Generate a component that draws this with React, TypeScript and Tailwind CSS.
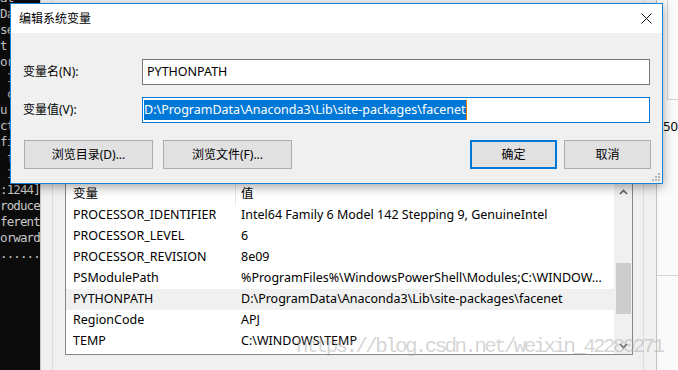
import React from "react";

const termLines = ["at", "Da", "se", "t", "or", " 1", " c", "u", "ct", "fi", " f", " 1", ":1244]", "roduce", "ferent", "orward", "......"];

const rows: [string, string][] = [
  ["PROCESSOR_IDENTIFIER", "Intel64 Family 6 Model 142 Stepping 9, GenuineIntel"],
  ["PROCESSOR_LEVEL", "6"],
  ["PROCESSOR_REVISION", "8e09"],
  ["PSModulePath", "%ProgramFiles%\\WindowsPowerShell\\Modules;C:\\WINDOW..."],
  ["PYTHONPATH", "D:\\ProgramData\\Anaconda3\\Lib\\site-packages\\facenet"],
  ["RegionCode", "APJ"],
  ["TEMP", "C:\\WINDOWS\\TEMP"],
];

function Chevron({ up }: { up?: boolean }) {
  return (
    <svg width="9" height="6" viewBox="0 0 9 6">
      <path d={up ? "M1 5 L4.5 1.5 L8 5" : "M1 1 L4.5 4.5 L8 1"} fill="none" stroke="#606060" strokeWidth="1.6" />
    </svg>
  );
}

export default function App() {
  return (
    <div className="relative w-[678px] h-[370px] overflow-hidden bg-[#f0f0f0] font-['Noto_Sans','Noto_Sans_CJK_SC',sans-serif] text-[12.5px] text-black">
      {/* terminal */}
      <div className="absolute left-0 top-[-10px] w-[40px] h-[390px] bg-[#0c0c0c] overflow-hidden font-['DejaVu_Sans_Mono',monospace] leading-[16px] text-[#c8c8c8] whitespace-pre">
        {termLines.map((l, i) => (
          <div key={i} className="h-[16px] text-[12.5px] tracking-[-0.9px]">{l}</div>
        ))}
      </div>

      {/* environment variables window */}
      <div className="absolute left-[40px] top-0 w-[617px] h-[370px] bg-[#f0f0f0] border-l border-r border-[#c4c4c4] pl-[11px]">
        <div className="h-full w-[592px] border-l border-r border-[#dcdcdc] pl-[12px] pt-[182px]">
          <div className="w-[568px] h-[173px] border border-[#828790] bg-white flex">
            <div className="flex-1 flex flex-col">
              <div className="h-[22px] flex items-center">
                <div className="w-[170px] h-full border-r border-[#e5e5e5] pl-[7px] flex items-center">变量</div>
                <div className="pl-[5px]">值</div>
              </div>
              {rows.map(([k, v]) => (
                <div key={k} className={`h-[21px] flex items-center whitespace-nowrap ${k === "PYTHONPATH" ? "bg-[#f0f0f0]" : ""}`}>
                  <div className="w-[170px] pl-[7px]">{k}</div>
                  <div className="pl-[5px]">{v}</div>
                </div>
              ))}
            </div>
            <div className="w-[18px] bg-[#f0f0f0] flex flex-col items-center">
              <div className="h-[17px] flex items-center justify-center"><Chevron up /></div>
              <div className="mt-[63px] w-[15px] h-[51px] bg-[#cdcdcd]" />
              <div className="flex-1" />
              <div className="h-[17px] flex items-center justify-center"><Chevron /></div>
            </div>
          </div>
        </div>
      </div>

      {/* right window */}
      <div className="absolute left-[657px] top-0 w-[21px] h-[370px] bg-[#fafafa] flex flex-col">
        <div className="h-[100px] border-b border-[#d4d4d4] ml-[10px] border-l" />
        <div className="pt-[17px] pl-[6px] text-[13px] leading-[18px]">50</div>
        <div className="mt-[140px] border-t border-[#d4d4d4]" />
      </div>

      {/* edit dialog */}
      <div className="absolute left-[10px] top-[3px] w-[653px] h-[181px] border border-[#1883d7] bg-[#f0f0f0] flex flex-col shadow-[0_3px_10px_rgba(0,0,0,0.35)]">
        <div className="h-[29px] bg-white flex items-center justify-between pl-[8px] pr-[10px]">
          <span className="text-[12px]">编辑系统变量</span>
          <svg width="11" height="11" viewBox="0 0 11 11">
            <path d="M0.5 0.5 L10.5 10.5 M10.5 0.5 L0.5 10.5" stroke="#111" strokeWidth="1" />
          </svg>
        </div>
        <div className="relative flex-1 pl-[12px] pr-[11px] pt-[26px] flex flex-col">
          <div className="flex items-center">
            <div className="w-[119px] text-[12px]">变量名(N):</div>
            <div className="w-[508px] h-[26px] border border-[#7a7a7a] bg-white flex items-center pl-[4px]">PYTHONPATH</div>
          </div>
          <div className="flex items-center mt-[12px]">
            <div className="w-[119px] text-[12px]">变量值(V):</div>
            <div className="w-[508px] h-[26px] border border-[#0078d7] bg-white flex items-center pl-[1px]">
              <span className="bg-[#0078d7] text-white leading-[20px]">D:\ProgramData\Anaconda3\Lib\site-packages\facenet</span>
              <span className="w-[1px] h-[20px] bg-[#e07b00]" />
            </div>
          </div>
          <div className="flex items-center mt-[17px] pl-[1px] text-[12px]">
            <div className="w-[129px] h-[29px] border border-[#adadad] bg-[#e1e1e1] flex items-center justify-center">浏览目录(D)...</div>
            <div className="ml-[10px] w-[129px] h-[29px] border border-[#adadad] bg-[#e1e1e1] flex items-center justify-center">浏览文件(F)...</div>
            <div className="flex-1" />
            <div className="w-[87px] h-[29px] border-2 border-[#0078d7] bg-[#e1e1e1] flex items-center justify-center">确定</div>
            <div className="ml-[7px] w-[87px] h-[29px] border border-[#adadad] bg-[#e1e1e1] flex items-center justify-center">取消</div>
          </div>
          <svg className="absolute right-[2px] bottom-[2px]" width="8" height="8" viewBox="0 0 8 8">
            <rect x="6" y="0" width="2" height="2" fill="#b8b8b8" />
            <rect x="3" y="3" width="2" height="2" fill="#b8b8b8" />
            <rect x="6" y="3" width="2" height="2" fill="#b8b8b8" />
            <rect x="0" y="6" width="2" height="2" fill="#b8b8b8" />
            <rect x="3" y="6" width="2" height="2" fill="#b8b8b8" />
            <rect x="6" y="6" width="2" height="2" fill="#b8b8b8" />
          </svg>
        </div>
      </div>

      {/* watermark */}
      <div className="absolute left-[296px] top-[334px] font-['Liberation_Mono',monospace] text-[21px] tracking-[-2.7px] leading-[26px] text-[#a0a0a0]/45 whitespace-nowrap">
        https://blog.csdn.net/weixin_42280271
      </div>
    </div>
  );
}
